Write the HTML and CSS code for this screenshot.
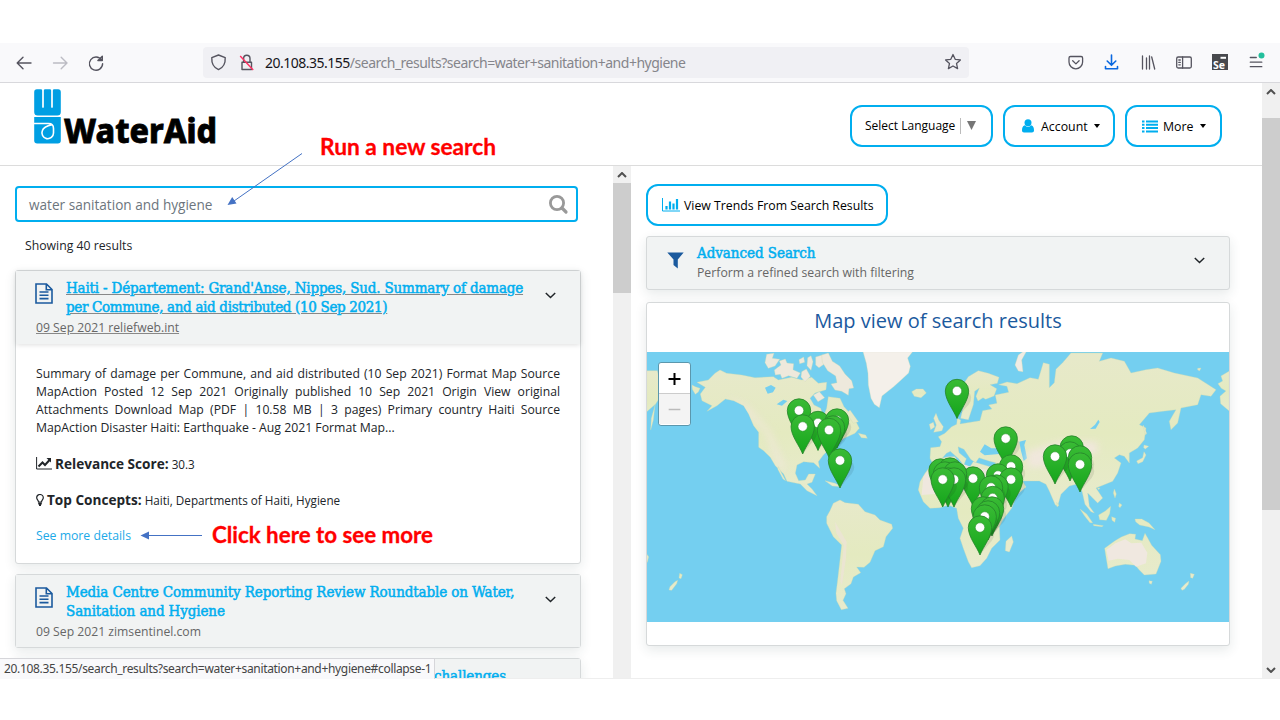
FILE: index.html
```html
<!DOCTYPE html>
<html lang="en">
<head>
<meta charset="utf-8">
<title>WaterAid search results</title>
<link rel="stylesheet" href="styles.css">
</head>
<body>
<div class="slide">
  <div class="toolbar">
    <svg class="nav-icons" width="203" height="39" viewBox="0 43 203 39" fill="none" stroke-width="1.4" stroke-linecap="round" stroke-linejoin="round">
      <path stroke="#55545f" d="M31 63H17.500M23 57.200 17.200 63l5.800 5.800"/>
      <path stroke="#bcbcc4" d="M53.500 63H67M61.200 57.200 67 63l-5.800 5.800"/>
      <path stroke="#55545f" d="M101.500 60a6.600 6.600 0 1 0 1.100 3.800M102.300 56.300v4.200h-4.400z"/>
    </svg>
    <div class="urlbar">
      <svg width="56" height="31" viewBox="203 47 56 31" fill="none" stroke="#55545f" stroke-width="1.400" stroke-linejoin="round">
        <path d="M218.500 55l6.700 2.600c.3 5-1.500 9.800-6.700 12-5.200-2.200-7-7-6.700-12z"/>
        <path d="M242 62.200h9.500v7.300H242zM243.600 62v-3.500a3.200 3.200 0 0 1 6.400 0V62"/>
        <path stroke="#ff3062" d="M240.200 56l13 14"/>
      </svg>
      <span class="url"><b>20.108.35.155</b>/search_results?search=water+sanitation+and+hygiene</span>
      <svg class="star" width="18" height="18" viewBox="0 0 18 18" fill="none" stroke="#55545f" stroke-width="1.300" stroke-linejoin="round"><path d="M9 1.500l2.200 4.800 5.200.6-3.900 3.500 1.100 5.200L9 13l-4.600 2.600 1.100-5.200L1.600 6.900l5.200-.6z"/></svg>
    </div>
    <svg class="tools" width="220" height="39" viewBox="1060 43 220 39" fill="none" stroke="#55545f" stroke-width="1.300" stroke-linecap="round" stroke-linejoin="round">
      <path d="M1070.500 56.500h10.600a1.500 1.500 0 0 1 1.500 1.500v4a6.800 6.800 0 0 1-13.600 0v-4a1.500 1.500 0 0 1 1.500-1.500zM1072.700 60.800l3.200 3.100 3.200-3.100"/>
      <path stroke="#0a68e0" stroke-width="1.600" d="M1111.500 55v10M1107.200 61l4.300 4.300 4.300-4.300M1105.500 66.500v2.300h12v-2.300"/>
      <path d="M1142.500 56v13M1146.500 58v11M1149.500 56v13M1151.700 57l3 12"/>
      <rect x="1176.700" y="57" width="14.600" height="11" rx="1.500"/><path d="M1182.600 57v11M1178.800 60h1.500M1178.800 62.400h1.500M1178.800 64.800h1.500"/>
      <path fill="#48494d" stroke="none" d="M1212 54h16v16h-16z"/><path stroke="#fff" stroke-width="2" stroke-linecap="butt" d="M1220.500 57.800h5.500"/>
      <text x="1213" y="68.500" class="se" textLength="12" lengthAdjust="spacingAndGlyphs">Se</text>
      <path d="M1250.300 57.500h6M1250.300 62.200h11.500M1250.300 66.700h11.500"/><circle cx="1261.500" cy="55.500" r="3" fill="#23bf9c" stroke="none"/>
    </svg>
  </div>
  <div class="viewport">
    <div class="app">
      <header class="header">
        <svg class="logo" width="190" height="76" viewBox="33 88 190 76" role="img" aria-label="WaterAid">
          <path fill="#009fe3" d="M34.200 92a2.800 2.800 0 0 1 3-2.700h3c1.500 0 2.300.6 2.800 1.500.5-.9 1.300-1.500 2.800-1.500h3.400c1.500 0 2.300.6 2.800 1.500.5-.9 1.300-1.500 2.800-1.500h3a2.800 2.800 0 0 1 3 2.700V112a3.500 3.500 0 0 1-3.500 3.500H37.700a3.500 3.500 0 0 1-3.500-3.500z"/>
          <path stroke="#fff" stroke-width="1.700" stroke-linecap="round" d="M43 90v17M52 90v17" fill="none"/>
          <path fill="#009fe3" d="M34.200 117h26.600v23.500a3 3 0 0 1-3 3H37.200a3 3 0 0 1-3-3z"/>
          <path fill="none" stroke="#fff" stroke-width="1.600" stroke-linecap="round" d="M34 123.500h14.500c3.700 0 5 2 5 5v4.500a5.800 5.800 0 1 1-11.200-2.200c.8-2.700 5.400-5.200 9.700-6.200"/>
          <text x="64" y="142.700" class="brand" textLength="153" lengthAdjust="spacingAndGlyphs">WaterAid</text>
        </svg>
        <nav class="menu">
          <div class="pill lang">Select Language<i></i><svg width="9" height="9" viewBox="0 0 9 9"><path fill="#767676" d="M0 0h9L4.500 9z"/></svg></div>
          <div class="pill account"><svg width="12" height="14" viewBox="0 0 12 14" fill="#00aeef"><circle cx="6" cy="3.700" r="3.500"/><path d="M2.800 6.300c2 2 4.400 2 6.400 0C11.500 7 12 9 12 11.500c0 1.200-.8 2-2 2H2c-1.200 0-2-.8-2-2C0 9 .5 7 2.800 6.300z"/></svg>Account<span class="caret"></span></div>
          <div class="pill more"><svg width="16" height="13" viewBox="0 0 16 13" stroke="#00aeef" stroke-width="2"><path d="M0 1.500h2.500M4 1.500h12M0 4.800h2.500M4 4.800h12M0 8.100h2.500M4 8.100h12M0 11.400h2.500M4 11.400h12"/></svg>More<span class="caret"></span></div>
        </nav>
      </header>
      <div class="columns">
        <main class="results">
          <div class="search"><span>water sanitation and hygiene</span><svg width="22" height="22" viewBox="0 0 22 22" fill="none" stroke="#999" stroke-width="2.800"><circle cx="10" cy="10" r="6.600"/><path d="M15 15l4 4" stroke-width="3.200" stroke-linecap="round"/></svg></div>
          <p class="count">Showing 40 results</p>
          <article class="card open">
            <div class="card-head">
              <svg class="doc" width="18" height="21" viewBox="0 0 18 21" fill="none" stroke="#1b5a9e" stroke-width="1.600"><path d="M1 1h10.500L17 6.500V20H1zM11.300 1v5.700H17M4.500 9h9M4.500 12.300h9M4.500 15.600h9"/></svg>
              <h2><span class="t1">Haiti - Département: Grand'Anse, Nippes, Sud. Summary of damage</span><br><span class="t2">per Commune, and aid distributed (10 Sep 2021)</span></h2>
              <svg class="chev" width="11" height="7" viewBox="0 0 11 7" fill="none" stroke="#212529" stroke-width="1.500"><path d="M.8 1l4.700 4.500L10.200 1"/></svg>
              <p class="meta">09 Sep 2021 reliefweb.int</p>
            </div>
            <div class="card-body">
              <p class="summary"><span>Summary of damage per Commune, and aid distributed (10 Sep 2021) Format Map Source</span><span>MapAction Posted 12 Sep 2021 Originally published 10 Sep 2021 Origin View original</span><span>Attachments Download Map (PDF | 10.58 MB | 3 pages) Primary country Haiti Source</span><span class="last">MapAction Disaster Haiti: Earthquake - Aug 2021 Format Map...</span></p>
              <p class="fact"><svg width="16" height="13" viewBox="0 0 16 13" fill="none" stroke="#212529"><path d="M.6 0v12H16" stroke-width="1"/><path d="M2.500 9.500l4-4 2.500 2.500 5-5.500" stroke-width="2"/><path fill="#212529" stroke="none" d="M10.500 1H15v4.500z"/></svg><b class="rel">Relevance Score:</b> 30.3</p>
              <p class="fact"><svg class="bulb" width="8" height="12" viewBox="0 0 8 12" fill="none" stroke="#212529" stroke-width="1.200"><path d="M2.500 8C2.500 6 .7 5.800.7 3.800a3.300 3.300 0 0 1 6.600 0C7.300 5.800 5.500 6 5.500 8z"/><path d="M2.200 9.500h3.600M3 11h2" stroke-width="1.800"/></svg><b class="top">Top Concepts:</b> Haiti, Departments of Haiti, Hygiene</p>
              <a class="details">See more details</a>
            </div>
          </article>
          <article class="card">
            <div class="card-head">
              <svg class="doc" width="18" height="21" viewBox="0 0 18 21" fill="none" stroke="#1b5a9e" stroke-width="1.600"><path d="M1 1h10.500L17 6.500V20H1zM11.300 1v5.700H17M4.500 9h9M4.500 12.300h9M4.500 15.600h9"/></svg>
              <h2><span class="t3">Media Centre Community Reporting Review Roundtable on Water,</span><br><span class="t4">Sanitation and Hygiene</span></h2>
              <svg class="chev" width="11" height="7" viewBox="0 0 11 7" fill="none" stroke="#212529" stroke-width="1.500"><path d="M.8 1l4.700 4.500L10.200 1"/></svg>
              <p class="meta">09 Sep 2021 zimsentinel.com</p>
            </div>
          </article>
          <article class="card"><div class="card-head cut"><h2>challenges</h2></div></article>
        </main>
        <div class="scroll inner"><svg width="10" height="6" viewBox="0 0 10 6" fill="none" stroke="#505050" stroke-width="2"><path d="M1 5l4-4 4 4"/></svg><div class="thumb"></div></div>
        <aside class="side">
          <div class="pill trends"><svg width="18" height="14" viewBox="0 0 18 14" stroke="#00aeef" fill="none"><path d="M.5 0v13H18"/><path stroke-width="2.200" d="M4.500 11.500V8M8 11.500V3.500M11.500 11.500V5.500M15 11.500V1"/></svg>View Trends From Search Results</div>
          <section class="card advanced">
            <svg width="17" height="17" viewBox="0 0 17 17"><path fill="#1b5a9e" d="M.3.500h16.400L10.800 7.500v9L6.500 13V7.500z"/></svg>
            <div class="adv-text"><h2>Advanced Search</h2><p>Perform a refined search with filtering</p></div>
            <svg width="11" height="7" viewBox="0 0 11 7" fill="none" stroke="#212529" stroke-width="1.500"><path d="M.8 1l4.700 4.500L10.200 1"/></svg>
          </section>
          <section class="card map-card">
            <h3>Map view of search results</h3>
            <div class="map">
              <svg width="582" height="270" viewBox="647 352 582 270">
                <defs>
                  <linearGradient id="pinFill" x1="0" y1="0" x2="0" y2="1"><stop offset="0" stop-color="#3abb35"/><stop offset="1" stop-color="#14a51b"/></linearGradient>
                  <linearGradient id="land" x1="0" y1="0" x2="0" y2="1"><stop offset="0" stop-color="#e7e9ca"/><stop offset=".5" stop-color="#e4eac0"/><stop offset="1" stop-color="#e8ebcd"/></linearGradient>
                  <filter id="soft" x="-.5" y="-.5" width="2" height="2"><feGaussianBlur stdDeviation="11"/></filter>
                  <g id="pin"><path fill="#000" opacity=".08" d="M0 0L8-10Q17-18 13-25L5-30z"/><path fill="url(#pinFill)" stroke="#24832a" stroke-width=".8" d="M0 0C-3-8-11.700-18-11.700-27.500A11.700 11.700 0 0 1 11.700-27.500C11.700-18 3-8 0 0z"/><circle cy="-27.500" r="4.700" fill="#fff" stroke="#2a8d2c" stroke-width=".5"/></g>
                  <path id="northAmShape" d="M190 105l20-20 15-10 20 10 45 5 40 8 55-3 15 10 40-8 30 8 30-8 20 18 25-3-2 22-33 10-15 16 12 20 20 10 8 25 10-25 5-35 35 5 12 25 18 20 18 25 10 20-13 15-33 15-30 22-17 13-15 15-15 20 4 20-18-17-30-3-20 10-5 25 10 22 20-2 10-18h20l-10 25-15 5 15 15 15 20-30-15-20-20-40-8-10-22-25-25-15-25-20-20-15-10v-45l-15-20-15-35-15-25-30-15-25-5-25 20-30 17 15-17-30-15-5-20 15-20-25-15z"/>
                  <clipPath id="northAm"><use href="#northAmShape"/></clipPath>
                </defs>
                <g transform="translate(645 345) scale(.33333)" fill="url(#land)" stroke="#cadbb0" stroke-width="1">
                  <path d="M5 77h32l8 35 25-7 25 20-5 20-35-5-25 40-5 45-8 30 2-35 12-42-26 22z"/>
                  <path d="M141 120l10 5 14 5-5 11-9 7-9-15z"/>
                  <use href="#northAmShape"/>
                  <g clip-path="url(#northAm)" stroke="none"><path filter="url(#soft)" fill="#f3e7df" opacity=".5" d="M245 155l65 25 70 80 50 120-35-15-35-100-75-70z"/></g>
                  <g fill="#eee9dc">
                    <path d="M365 28l22-3-5 15 22 3-14 20-20 7-10-17zM388 75l20-15-5-12 18-6 5 12 20 2-2 18 22 10-10 16-25-8-20 8-5-12-15 2zM462 44l14-8 3 16-15 4zM488 38l10-6 6 18-6 26-12-14zM512 36l20-6 10 24-20 14-10-8zM470 80l14-8 12 22-16 16-12-14z"/>
                    <path d="M530 30l20-6 12 25 22 14 16 24 20 20 6 22-14 2-2 20-20-12-20-4-12-18 18-4-4-20-24-16-16-25zM505 150l18-10 16 18-20 12z"/>
                  </g>
                  <path d="M400 365l10 20 12 22-8-5-16-30zM540 407l30 8 20 10-28-2zM615 195l-10 10 20 30 15-5zM640 265l22 5 5 10-18-2z"/>
                  <path fill="#74cff0" stroke="none" d="M360 128l18-8 14 8-8 14-16 4zM395 178l20-14 12 4-16 14zM478 220l20-4 30 18-20 6z"/>
                  <path fill="#f4f0ea" d="M654 20l10 35 5 30 1 35 8 40 10 18 15 10 8-35 35-28 20-18 25-23 5-20-8-25 15-19z"/>
                  <path d="M800 140l14-8 20 0 10 12-16 14-20-4z"/>
                  <path d="M565 475l20-10 15 8 40 5 20 22 30 10 15 15 35 13 3 12-20 25-8 30-25 12-15 35-18 15-22-1 12 17-22 13-7 20-20 15 5 15-9 20 15 24-20 4-14-27-2-22 5-40 7-60 5-45-25-25-20-40v-20l10-18z"/>
                  <path fill="#eee2d8" stroke="none" opacity=".7" d="M570 530l35 60-2 50-12 80-5-10 10-110-22-35z"/>
                  <path d="M75 725l15-15 8-4-3 10-15 20-8-1zM104 685l8 4-4 12-6-2zM5 627l6 8-4 17H5z"/>
                  <g transform="translate(555 0)">
                    <path d="M285 385l15-20 10-20 45-10h20l10 18 35 12 10-15 50 15 25 5 15 50 20 35 16 5-11 30-27 35-10 20 2 40-25 25-15 30-20 22-25 6-10-18-15-40-10-30 10-30-15-30-5-30-25-10-25 8-30 2-20-20-15-35 5-25z"/>
                    <path fill="#efe7de" stroke="none" d="M280 395l30-40 55-10 60 22 50 8 30 40-20 20-80 5-60 5-70 5z"/>
                    <path d="M545 573l5 18-12 30-12-4 2-28zM318 205l8 20 14 20-4 12-25 5 8-22-8-20zM298 238l12-6 4 14-12 8z"/>
                    <path d="M392 220l8-35-5-60 20-30 30-18 30 8 32 12-5 18-22 4 20 12-8 22-25 10-8-5-15 10-6-14 10-25-14 10-4 40-15 45z"/>
                    <path d="M300 340l2-32 28-3 5-15-10-15 20-10 20-20 15-7 2-18 10 5-2 12 60-10 8-30 28-5-10-12 25-5-5-25 40-8-5-18-25-5 25-8 30 5 39-18 25 5 15-50 18 5v70l15-15 5-40 20-20 25-29h95l-10 25 35-10 40 10 20 35 45-10 35-5 50 15 70 15 55 35-15 20-30-5-10 30-50 10-10 45-20 20-5-25 20-35-40 5-40 5-30 35 20 10-5 35-20 25-25 15v30l-15-20-15-5-15 10 20 15-10 30-15 25-50 20 20 30-15 15-20-20-10-10 5 40 15 20-10-4-18-22-9-40-18-20-20 5-25 25-10 35-7-3-18-42-10-20-20-10h-50l10 18-35 30-30 7-25-55-8-30 7-25-20-5-30-10-10 15-15-10-20-30-18-8 3 18 22 18-8 20-15-20-25-22-12 6-20 24-20 8z"/>
                    <path fill="#74cff0" stroke="none" d="M450 320l14-22 20 12 25 0 25 15-35 3-35 3zM568 290l20-5-5 15 8 40-10 8-8-30z"/>
                  </g>
                  <g transform="translate(1125 0)">
                    <path fill="#f2e7df" stroke="none" filter="url(#soft)" opacity=".9" d="M20 320L120 290l110 0 5 30-100 40-110 10z"/>
                    <path fill="#efece4" d="M-5 78L-15 60-5 30 12 18h8L5 45l4 35z"/>
                    <path fill="#74cff0" stroke="none" d="M210 252l15-13 10-15 4 7-12 20z"/>
                    <path d="M254 610l30-22 20-12 25-10 18 2-2 14 22 5 8-22 8 14 12 22 26 28 2 20-15 38-35 3-15-15-12-14-30-3-30 5-22 8-5-30zM387 707l10 2-3 9-6-3zM180 492l20 15 18 26-8 0-16-20zM236 510l20-12 16-14-3 22-10 20-20-2zM345 522l20 0 22 12 18 20-18-8-28-6-12-10zM220 538l30 4-4 3-25-3zM275 515l12 5-3 12-8-6zM283 432l6 15-4 12-5-15zM110 472l7 9-6 5zM350 348l18-10 4-18 6 10-10 20-14 6zM372 300l14 4-10 8-5-4zM370 240l10 25-3 5-8-24zM483 730l15-15 9-7-2 10-12 15-7 3zM511 685l12 3-5 12-6-2zM298 474l8 6-6 8-4-4zM232 428l8 2-4 4z"/>
                    <path fill="#f0e8e0" stroke="none" d="M259 615l27-20 30-12 18 12 30-2 18 30-4 32-30 10-20-20-34-4-28 6z"/>
                    <path d="M628 78l-25 15 5 15-14 8 10 14 14 8-18 16 2 22 26 22zM533 70l10-1-4 8-6-2z"/>
                  </g>
                </g>
                <use href="#pin" x="799" y="438"/><use href="#pin" x="818" y="450.500"/><use href="#pin" x="837" y="448"/><use href="#pin" x="833" y="455"/><use href="#pin" x="829" y="457.500"/><use href="#pin" x="802.700" y="454"/><use href="#pin" x="840" y="488"/>
                <use href="#pin" x="957" y="418.500"/><use href="#pin" x="1005.700" y="466"/><use href="#pin" x="1011" y="494"/><use href="#pin" x="998" y="503"/><use href="#pin" x="1011" y="507"/><use href="#pin" x="973" y="506"/>
                <use href="#pin" x="940.500" y="498"/><use href="#pin" x="950" y="497"/><use href="#pin" x="945" y="501"/><use href="#pin" x="955" y="501"/><use href="#pin" x="948" y="507"/><use href="#pin" x="954" y="507"/><use href="#pin" x="942.700" y="507"/>
                <use href="#pin" x="996.500" y="514"/><use href="#pin" x="991" y="515"/><use href="#pin" x="992.700" y="525.500"/><use href="#pin" x="983" y="536"/><use href="#pin" x="992" y="536"/><use href="#pin" x="988" y="540"/><use href="#pin" x="984.700" y="544"/><use href="#pin" x="980" y="555"/>
                <use href="#pin" x="1071.700" y="475"/><use href="#pin" x="1070" y="481"/><use href="#pin" x="1080" y="485"/><use href="#pin" x="1055" y="484"/><use href="#pin" x="1080" y="492"/>
              </svg>
              <div class="zoom"><svg width="31" height="30" viewBox="0 0 31 30" stroke="#000" stroke-width="2"><path d="M9.500 16h12M15.500 10v12"/></svg><svg class="minus" width="31" height="31" viewBox="0 0 31 31" stroke="#bbb" stroke-width="1.500"><path d="M9.500 16h12"/></svg></div>
            </div>
          </section>
        </aside>
      </div>
    </div>
    <div class="scroll outer"><svg width="10" height="6" viewBox="0 0 10 6" fill="none" stroke="#505050" stroke-width="2"><path d="M1 5l4-4 4 4"/></svg><div class="thumb"></div><svg class="down" width="10" height="6" viewBox="0 0 10 6" fill="none" stroke="#505050" stroke-width="2"><path d="M1 1l4 4 4-4"/></svg></div>
  </div>
  <div class="status"><span>20.108.35.155/search_results?search=water+sanitation+and+hygiene#collapse-1</span></div>
  <svg class="notes" width="1280" height="720" viewBox="0 0 1280 720">
    <path stroke="#4472c4" fill="none" d="M302 153.500L234 201M202 535.500h-54"/>
    <path fill="#4472c4" d="M227.500 205l4.700-8 4.300 6.500zM140.500 535.500l8.500-4v8z"/>
    <text x="320" y="155" textLength="176" lengthAdjust="spacingAndGlyphs">Run a new search</text>
    <text x="212" y="543" textLength="221" lengthAdjust="spacingAndGlyphs">Click here to see more</text>
  </svg>
</div>
</body>
</html>
```
FILE: styles.css
```css
* { box-sizing: border-box; }
body { margin: 0; background: #fff; font-family: "Open Sans", sans-serif; color: #212529; }
h2, h3, p { margin: 0; font-weight: 400; }
svg { display: block; flex: none; }
.slide { position: relative; width: 1280px; height: 720px; padding-top: 43px; overflow: hidden; }
.toolbar { display: flex; align-items: center; height: 40px; background: #f9f9fb; border-bottom: 1px solid #d8d8dc; }
.urlbar { display: flex; align-items: center; width: 766px; height: 31px; background: #f0f0f4; border-radius: 4px; margin-bottom: 1px; }
.url { margin-left: 6px; font: 14px "Noto Sans", sans-serif; color: #85858b; white-space: nowrap; letter-spacing: -.5px; }
.url b { font-weight: 400; color: #15141a; }
.star { margin-left: auto; margin-right: 7px; }
.tools { margin-left: auto; }
.se { font: 700 10px "Open Sans", sans-serif; fill: #fff; stroke: none; }
.viewport { display: flex; height: 596px; overflow: hidden; border-bottom: 1px solid #eee; }
.app { width: 1262px; display: flex; flex-direction: column; }
.header { height: 83px; flex: none; display: flex; justify-content: space-between; padding: 5px 40px 0 33px; border-bottom: 1px solid #dcdcdc; }
.logo { overflow: visible; }
.brand { font: 800 34px "Noto Sans", sans-serif; fill: #000; stroke: #000; stroke-width: .8px; }
.menu { display: flex; gap: 10px; padding-top: 17px; }
.pill { display: flex; align-items: center; height: 42px; border: 2px solid #00aeef; border-radius: 12px; background: #fff; color: #000; font-size: 12.35px; white-space: nowrap; }
.lang { width: 143px; padding-left: 13px; padding-bottom: 1px; font-size: 12px; }
.lang i { width: 1px; height: 16px; margin: 0 6px 0 5px; background: #bbb; }
.account { width: 112px; padding-left: 17px; }
.account svg { margin-right: 7px; }
.more { width: 97px; padding-left: 15px; }
.more svg { margin-right: 5px; }
.caret { border: 3.5px solid transparent; border-top: 4px solid #000; border-bottom: 0; margin-left: 6px; }
.columns { flex: 1; display: flex; min-height: 0; }
.results { width: 613px; padding: 20px 32px 0 15px; overflow: hidden; }
.search { width: 563px; height: 36px; border: 2px solid #00aeef; border-radius: 4px; display: flex; align-items: center; justify-content: space-between; padding: 0 7px 0 12px; font-size: 13.6px; color: #6c757d; }
.count { height: 48px; padding: 15px 0 0 10px; font-size: 12.25px; line-height: 18px; }
.card { background: #fff; border: 1px solid #d6d9da; border-radius: 3px; box-shadow: 0 4px 12px rgba(40, 60, 60, .11); margin-bottom: 10px; }
.results .card { width: 566px; }
.results .open { height: 294px; }
.card-head { height: 72px; background: #f1f3f3; padding: 8px 24px 0 20px; display: grid; grid-template-columns: 30px 1fr 11px; grid-template-rows: 40px 18px; }
.open .card-head { height: 73px; box-shadow: 0 1px 5px rgba(0, 0, 0, .13); }
.results .cut { height: 40px; padding-left: 418px; display: block; }
.doc { margin-top: 4px; margin-left: -1px; }
h2 { font: 400 15px/19px "DejaVu Serif Condensed", "DejaVu Serif", serif; font-stretch: condensed; color: #00aeef; -webkit-text-stroke: .5px #00aeef; letter-spacing: -.11px; white-space: nowrap; }
.t1 { letter-spacing: -.17px; }
.t2 { letter-spacing: -.33px; }
.adv-text h2 { letter-spacing: -.05px; }
.open h2, .open .meta { text-decoration: underline; text-decoration-color: #888; }
.chev { margin-top: 13px; }
.meta { grid-column: 1 / -1; font-size: 12.2px; line-height: 18px; color: #666; }
.card-body { padding: 20.6px 20px 0 20px; }
.summary { font-size: 12.2px; line-height: 18.3px; }
.summary span { display: block; white-space: nowrap; text-align: justify; text-align-last: justify; }
.summary .last { text-align-last: left; font-size: 12.25px; }
.fact { display: flex; align-items: center; height: 18px; margin-top: 18px; font-size: 11.7px; white-space: pre; }
.summary + .fact { margin-top: 17px; }
.fact svg { margin-right: 3px; }
.fact b { font-size: 13.6px; }
.details { display: block; margin-top: 18px; font-size: 12.25px; line-height: 18px; color: #1ba9e8; }
.scroll { width: 18px; flex: none; background: #f0f0f0; display: flex; flex-direction: column; align-items: center; }
.thumb { width: 18px; background: #cdcdcd; }
.inner svg { margin: 6px 0 5px; }
.inner .thumb { height: 110px; }
.outer svg { margin: 6px 0 23px; }
.outer .thumb { height: 392px; }
.outer .down { margin: auto 0 5px; }
.side { width: 599px; padding: 18px 0 0 15px; }
.side .card { width: 584px; }
.trends { width: 242px; padding-left: 14px; margin-bottom: 10px; font-size: 12.3px; }
.trends svg { margin-right: 4px; }
.advanced { display: flex; align-items: center; height: 54px; padding: 0 24px 0 20px; background: #f1f3f3; margin-bottom: 12px; }
.advanced > svg:first-child { margin-bottom: 6px; }
.advanced > svg:last-child { margin-bottom: 5px; }
.adv-text { flex: 1; padding-left: 13px; }
.adv-text p { font-size: 12.25px; line-height: 19px; color: #666; }
.map-card { height: 344px; }
h3 { height: 49px; text-align: center; font-size: 20px; line-height: 36px; color: #1b5a9e; }
.map { position: relative; width: 582px; height: 270px; background: #74cff0; overflow: hidden; }
.zoom { position: absolute; left: 11px; top: 10px; width: 33px; height: 64px; border: 1.5px solid #5b97ad; border-radius: 3px; background: #fff; overflow: hidden; }
.minus { background: #f4f4f4; border-top: 1px solid #ccc; }
.status { position: absolute; left: 0; top: 658px; width: 435px; height: 21px; padding-left: 4px; background: #f9f9fb; border: solid #d6d6da; border-width: 1px 1px 0 0; font: 12px/20px "Noto Sans", sans-serif; letter-spacing: -.33px; color: #444; white-space: nowrap; }
.notes { position: absolute; left: 0; top: 0; }
.notes text { font: 700 22px Lato, sans-serif; fill: #f00; stroke: #f00; stroke-width: .3px; }
```
